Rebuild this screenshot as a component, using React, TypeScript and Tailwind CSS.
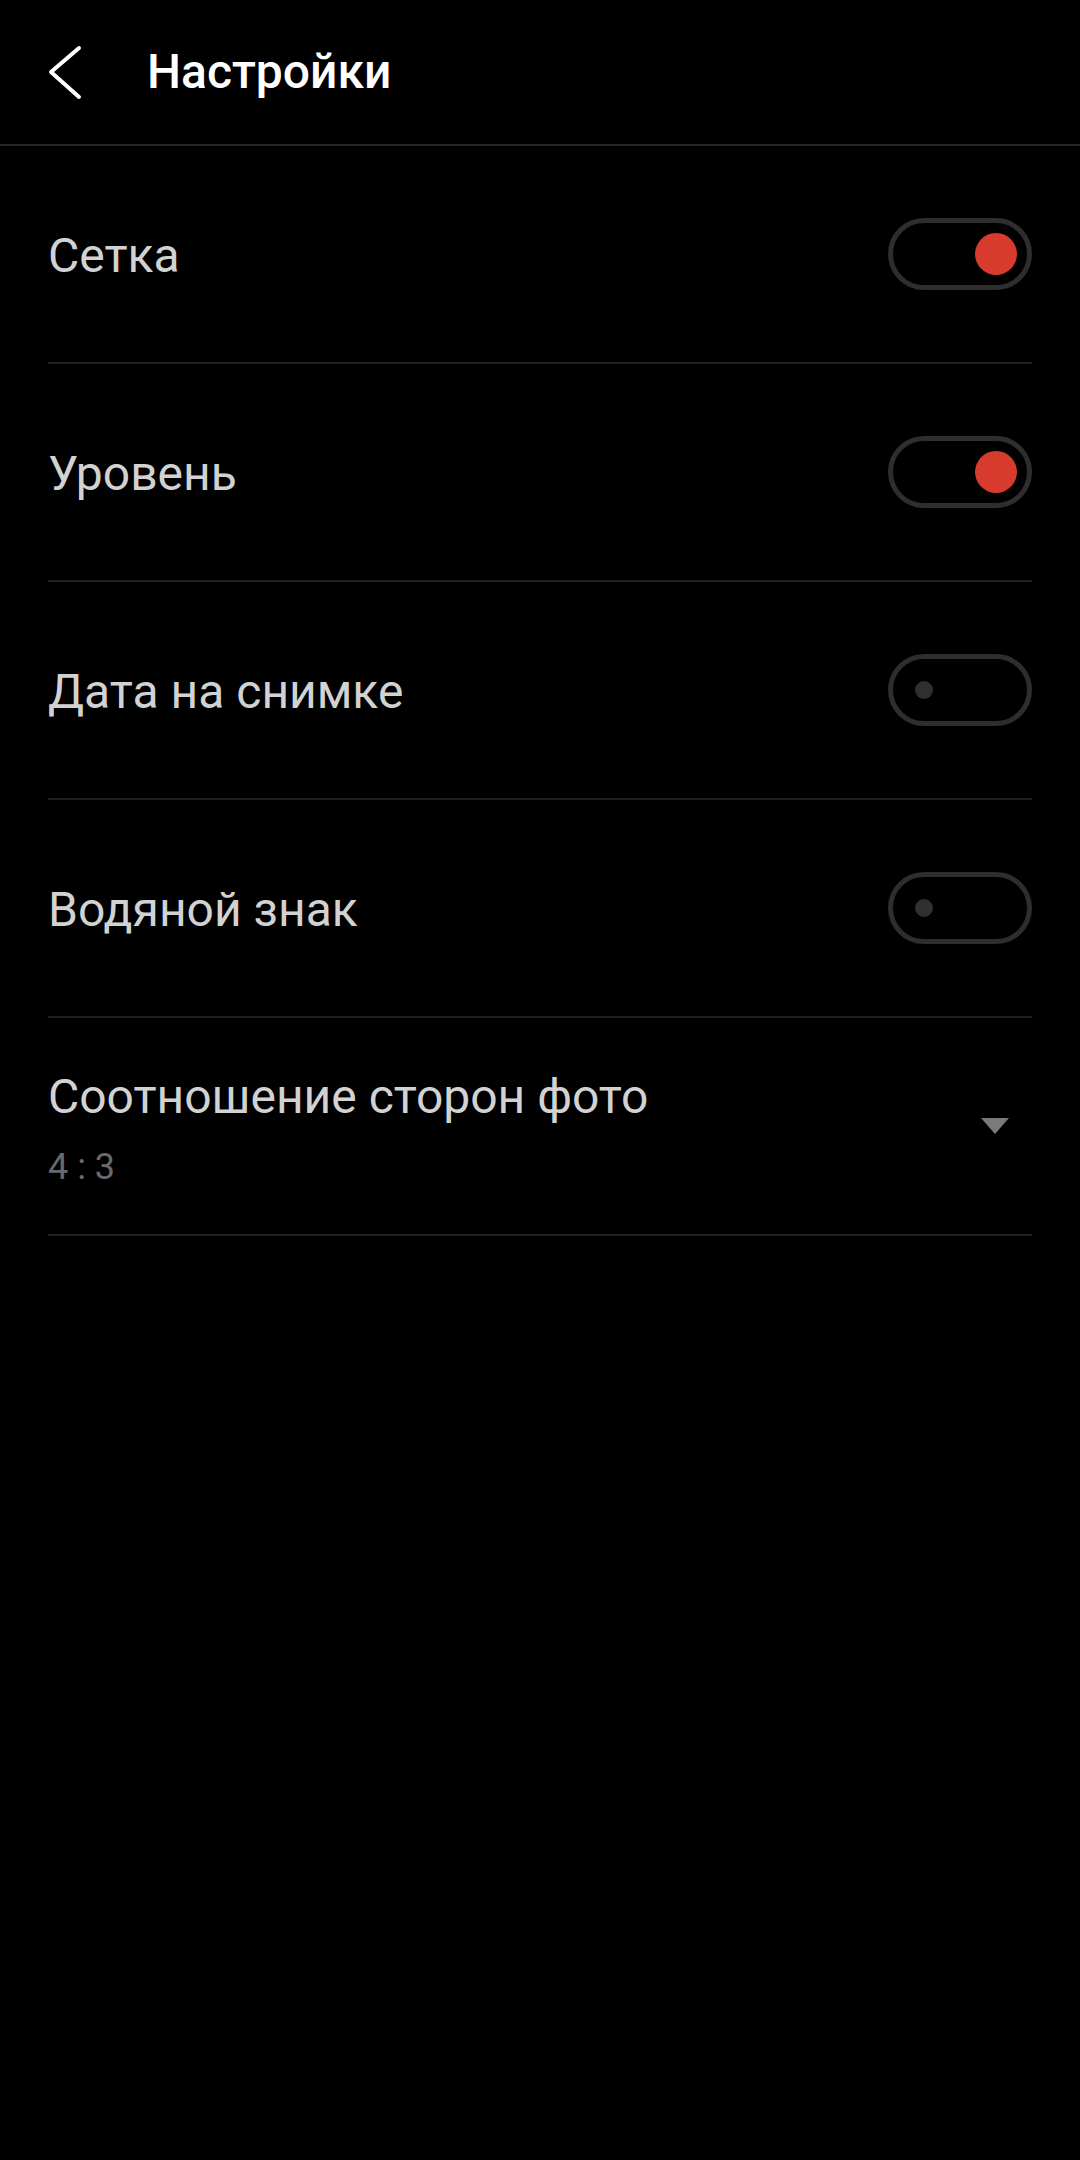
import React from "react";

function Toggle({ on }: { on: boolean }) {
  return (
    <div className="relative w-[144px] h-[72px] rounded-full border-[5px] border-[#2e2e2e] shrink-0">
      {on ? (
        <div className="absolute right-[10px] top-[10px] w-[42px] h-[42px] rounded-full bg-[#d63b2d]" />
      ) : (
        <div className="absolute left-[22px] top-[22px] w-[18px] h-[18px] rounded-full bg-[#303030]" />
      )}
    </div>
  );
}

function ToggleRow({ label, on }: { label: string; on: boolean }) {
  return (
    <div className="h-[218px] border-b-2 border-[#1f1f1f] flex items-center justify-between">
      <span className="text-[48px] text-[#d2d2d2] leading-none pt-[3px]">{label}</span>
      <Toggle on={on} />
    </div>
  );
}

export default function App() {
  return (
    <div
      className="w-[1080px] h-[2160px] bg-black"
      style={{ fontFamily: "Roboto, 'Noto Sans', sans-serif" }}
    >
      <div className="h-[146px] border-b-2 border-[#262626] flex items-center">
        <svg width="144" height="144" viewBox="0 0 144 144" className="shrink-0">
          <path
            d="M79 48 L51 72 L79 97"
            fill="none"
            stroke="#ffffff"
            strokeWidth="4"
            strokeLinecap="round"
            strokeLinejoin="round"
          />
        </svg>
        <span className="text-[48px] font-medium text-white leading-none ml-[3px]">
          Настройки
        </span>
      </div>
      <div className="px-[48px]">
        <ToggleRow label="Сетка" on={true} />
        <ToggleRow label="Уровень" on={true} />
        <ToggleRow label="Дата на снимке" on={false} />
        <ToggleRow label="Водяной знак" on={false} />
        <div className="h-[218px] border-b-2 border-[#1f1f1f] flex items-start justify-between">
          <div className="flex flex-col pt-[55px]">
            <span className="text-[48px] text-[#d2d2d2] leading-none">
              Соотношение сторон фото
            </span>
            <span className="text-[36px] text-[#6a6a6a] leading-none mt-[28px]">
              4 : 3
            </span>
          </div>
          <svg width="28" height="16" viewBox="0 0 28 16" className="mr-[23px] mt-[100px]">
            <path d="M0 0 L28 0 L14 16 Z" fill="#7a7a7a" />
          </svg>
        </div>
      </div>
    </div>
  );
}
